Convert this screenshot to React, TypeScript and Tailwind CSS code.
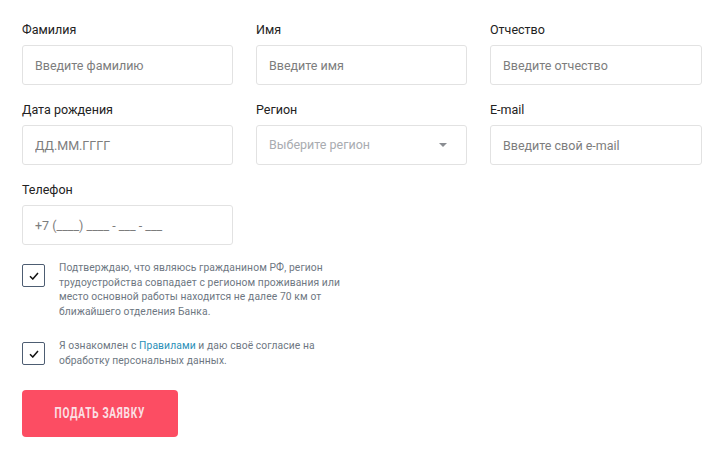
import { useState } from 'react';

const Field = ({ label, placeholder }: { label: string; placeholder: string }) => (
  <div className="flex flex-col">
    <label className="text-[12.5px] leading-4 text-[#222]">{label}</label>
    <input
      placeholder={placeholder}
      className="mt-[7px] h-10 w-full rounded-[3px] border border-[#e2e2e2] bg-white px-3 text-[12.5px] text-[#333] outline-none placeholder:text-[#7d7d7d]"
    />
  </div>
);

const Check = ({ children }: { children: React.ReactNode }) => {
  const [on, setOn] = useState(true);
  return (
    <div className="flex items-start gap-[14px]">
      <button
        onClick={() => setOn(!on)}
        className="mt-[3px] flex h-[23px] w-[23px] shrink-0 items-center justify-center rounded-[2px] border-[1.5px] border-[#4d5d72] bg-white"
      >
        {on && (
          <svg width="10" height="8" viewBox="0 0 10 8" fill="none">
            <path d="M1 4.2 L3.8 7 L9 1" stroke="#111" strokeWidth="1.5" />
          </svg>
        )}
      </button>
      <p className="whitespace-nowrap text-[10.3px] leading-[14.5px] tracking-[0.1px] text-[#6e7782]">{children}</p>
    </div>
  );
};

export default function App() {
  return (
    <div className="min-h-[457px] bg-white pl-[22px] pt-[22px] font-['Roboto',sans-serif]">
      <div className="grid grid-cols-[211px_211px_212px] gap-x-[23px] gap-y-[17px]">
        <Field label="Фамилия" placeholder="Введите фамилию" />
        <Field label="Имя" placeholder="Введите имя" />
        <Field label="Отчество" placeholder="Введите отчество" />
        <Field label="Дата рождения" placeholder="ДД.ММ.ГГГГ" />
        <div className="flex flex-col">
          <label className="text-[12.5px] leading-4 text-[#222]">Регион</label>
          <div className="mt-[7px] flex h-10 items-center justify-between rounded-[3px] border border-[#e2e2e2] bg-white pl-3 pr-[19px]">
            <span className="text-[12.5px] text-[#a9acb1]">Выберите регион</span>
            <svg width="8" height="4" viewBox="0 0 8 4">
              <path d="M0 0 H8 L4 4 Z" fill="#8a8d92" />
            </svg>
          </div>
        </div>
        <Field label="E-mail" placeholder="Введите свой e-mail" />
        <Field label="Телефон" placeholder="+7 (____) ____ - ___ - ___" />
      </div>

      <div className="mt-[16px]">
        <Check>
          Подтверждаю, что являюсь гражданином РФ, регион
          <br />
          трудоустройства совпадает с регионом проживания или
          <br />
          место основной работы находится не далее 70 км от
          <br />
          ближайшего отделения Банка.
        </Check>
        <div className="mt-[20px]">
          <Check>
            Я ознакомлен с <a className="text-[#2a8fb8]">Правилами</a> и даю своё согласие на
            <br />
            обработку персональных данных.
          </Check>
        </div>
      </div>

      <button className="mt-[22px] flex h-[47px] w-[156px] items-center justify-center rounded-[4px] bg-[#fc4d63] text-[14px] font-bold text-[#fbe0e5]">
        <span className="inline-block scale-x-[0.72] whitespace-nowrap tracking-[1px]">ПОДАТЬ ЗАЯВКУ</span>
      </button>
    </div>
  );
}
